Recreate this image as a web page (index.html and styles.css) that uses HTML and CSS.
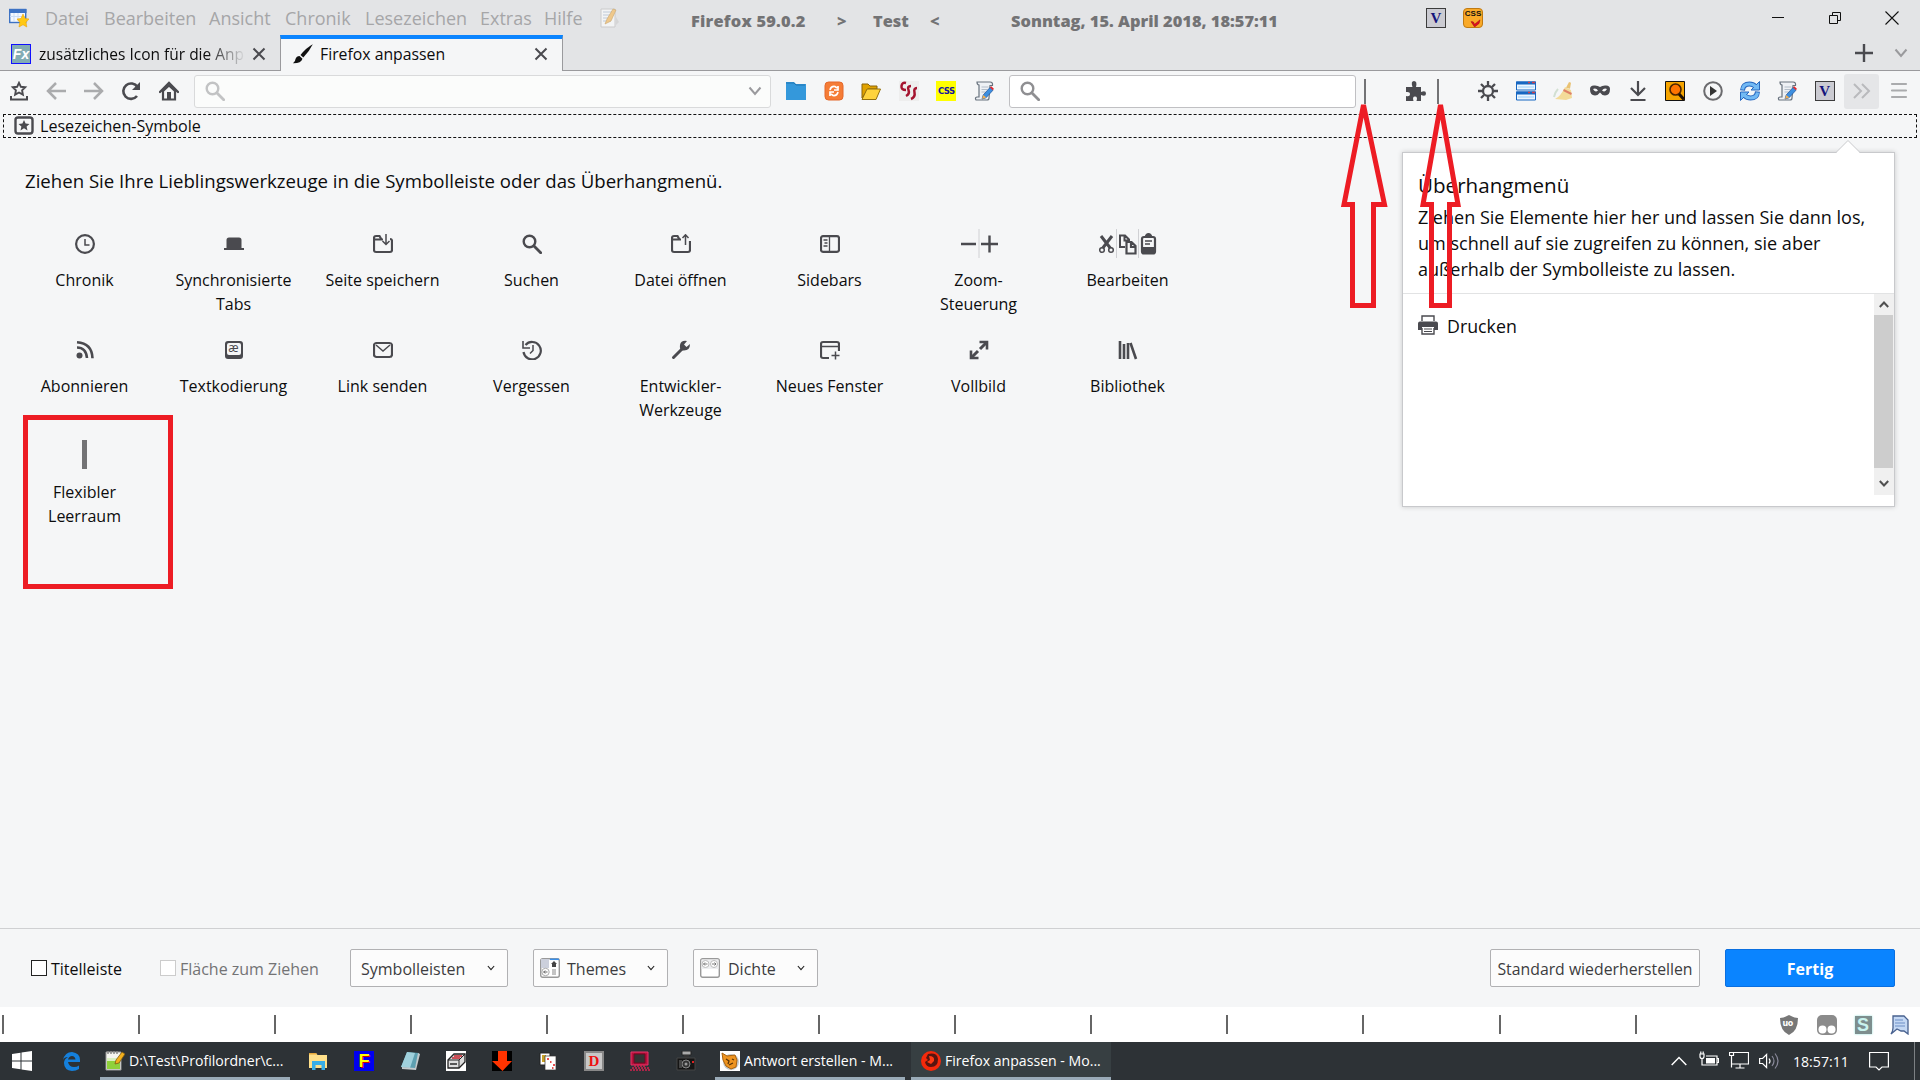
FILE: index.html
```html
<!DOCTYPE html>
<html lang="de">
<head>
    <meta charset="UTF-8">
    <meta name="viewport" content="width=device-width, initial-scale=1.0">
    <title>Firefox anpassen</title>
    <link rel="stylesheet" href="styles.css">
</head>
<body>
    <svg class="defs" width="0" height="0">
        <symbol id="i-search" viewBox="0 0 20 20"><circle cx="7.5" cy="7.5" r="5.8" fill="none" stroke="currentColor" stroke-width="2.4"/><path d="M12 12l6.7 6.7" stroke="currentColor" stroke-width="2.8" stroke-linecap="round"/></symbol>
        <symbol id="i-x" viewBox="0 0 14 14"><path d="M1.5 1.5l11 11M12.500 1.500l-11 11" stroke="currentColor" stroke-width="2"/></symbol>
        <symbol id="i-down" viewBox="0 0 14 10"><path d="M1.500 1.500L7 8l5.500-6.500" fill="none" stroke="currentColor" stroke-width="2"/></symbol>
        <symbol id="i-scroll" viewBox="0 0 20 20">
            <path d="M3 1h13q3 0 2.500 3.500h-2.500L15 17q0 2-2 2H2q-1.500-2.500 1-3h2V4Q3 4 3 1z" fill="#eef1f5" stroke="#68727e" stroke-width="1.200"/>
            <path d="M7.500 6h7M7.500 8.500h6M7.500 11h4" stroke="#b3bdc9"/>
            <path d="M8 18l1.200-4 6.800-7.500 3 2.700-7 7.600z" fill="#3d8fe0" stroke="#1d4f95" stroke-width=".7"/>
            <path d="M16 6.500l1.300-1.200 2.600 2.400L19 9.200z" fill="#e3242b"/>
            <path d="M8 18l1.200-4 3 2.500z" fill="#f4b052"/>
        </symbol>
    </svg>

    <header class="titlebar">
        <svg class="ic" viewBox="0 0 20 20"><rect x=".7" y="1.500" width="16" height="13" fill="#f3f8ff" stroke="#3d72c4" stroke-width="1.400"/><path d="M0 3h17.500" stroke="#3d72c4" stroke-width="4"/><path d="M5 5v9M9 5v9M1 8.500h15" stroke="#cbdcf5"/><path d="M14 6l2 4.500 4 .5-3 3.300.8 4.700-3.800-2.300L10 19l.8-4.700L8 11l4-.5z" fill="#ffc814" stroke="#eda207" stroke-width=".6"/></svg>
        <nav class="menu">
            <span class="m1">Datei</span><span class="m2">Bearbeiten</span><span class="m3">Ansicht</span><span class="m4">Chronik</span><span class="m5">Lesezeichen</span><span class="m6">Extras</span><span class="m7">Hilfe</span>
        </nav>
        <svg class="ic faded" viewBox="0 0 20 20"><path d="M1 1h14v18H1z" fill="#fff" stroke="#bbb"/><path d="M3 4h9M3 7h8M3 10h6M3 13h8" stroke="#a9b9d0"/><path d="M5 16l2-5 6-10 3 1-5 11z" fill="#f8b650" stroke="#b98025" stroke-width=".6"/><path d="M16 9l3 5-3 3z" fill="#ccc"/></svg>
        <div class="caption">
            <span class="c1">Firefox 59.0.2</span><span class="c2">&gt;</span><span class="c3">Test</span><span class="c4">&lt;</span><span class="c5">Sonntag, 15. April 2018, 18:57:11</span>
        </div>
        <span class="vbox">V</span>
        <span class="cssbadge">CSS<svg viewBox="0 0 14 9"><path d="M2 3q3-1 4 3l6-5-1 4-5 4z" fill="#e01022" stroke="#9b0b12" stroke-width=".6"/></svg></span>
        <div class="winctl">
            <svg viewBox="0 0 14 14"><path d="M1 6.500h12" stroke="#111"/></svg>
            <svg viewBox="0 0 14 14"><path d="M1.500 4.500h8v8h-8zM4.500 4.500v-3h8v8h-3" fill="none" stroke="#111"/></svg>
            <svg viewBox="0 0 14 14"><path d="M.5 .5l13 13M13.500 .5l-13 13" stroke="#111" stroke-width="1.100"/></svg>
        </div>
    </header>

    <div class="tabs">
        <div class="tab">
            <span class="fx">Fx</span>
            <span class="label fade">zusätzliches Icon für die Anp</span>
            <svg class="close"><use href="#i-x"/></svg>
        </div>
        <div class="tab active">
            <svg class="ic" viewBox="0 0 20 20"><path d="M19.800 .3Q13 4 7.500 11l2.800 2.500Q16 8 19.800 .3z" fill="#111"/><path d="M6.500 12l3 2.800Q8 19.500 0 19.300q2.500-2 2.500-4.300 1-3 4-3z" fill="#111"/></svg>
            <span class="label">Firefox anpassen</span>
            <svg class="close"><use href="#i-x"/></svg>
        </div>
        <div class="tabsend">
            <svg class="plus" viewBox="0 0 18 18"><path d="M9 0v18M0 9h18" stroke="#4a4a4f" stroke-width="2.400"/></svg>
            <svg class="chev"><use href="#i-down"/></svg>
        </div>
    </div>

    <div class="navbar">
        <div class="slots">
            <span><svg class="ic" viewBox="0 0 20 20"><path d="M10 1.800l1.900 4 4.300.5-3.100 3 .8 4.300L10 11.500l-3.900 2.100.8-4.300-3.100-3 4.300-.5z" fill="none" stroke="#4a4a4f" stroke-width="1.900"/><path d="M2 15v3.500h16V15" fill="none" stroke="#4a4a4f" stroke-width="2"/></svg></span>
            <span><svg class="ic pale" viewBox="0 0 20 20"><path d="M20 10H2M10 2l-8 8 8 8" fill="none" stroke="currentColor" stroke-width="2.500"/></svg></span>
            <span><svg class="ic pale" viewBox="0 0 20 20"><path d="M0 10h18M10 2l8 8-8 8" fill="none" stroke="currentColor" stroke-width="2.500"/></svg></span>
            <span><svg class="ic" viewBox="0 0 20 20"><path d="M16 15a7.700 7.700 0 1 1 .5-9" fill="none" stroke="#4a4a4f" stroke-width="2.600"/><path d="M19 1v8h-8z" fill="#4a4a4f"/></svg></span>
            <span><svg class="ic" viewBox="0 0 20 20"><path d="M1 11L10 2l9 9" fill="none" stroke="#4a4a4f" stroke-width="2.400" stroke-linecap="round"/><path d="M4 10v8.500h12V10l-6-5.500z" fill="none" stroke="#4a4a4f" stroke-width="2.200"/><path d="M8 11h4v7H8z" fill="#4a4a4f"/></svg></span>
        </div>
        <div class="field url"><svg class="ic"><use href="#i-search"/></svg><svg class="chev"><use href="#i-down"/></svg></div>
        <div class="slots">
            <span><svg class="ic" viewBox="0 0 20 20"><path d="M0 1h8l2 2h10v16H0z" fill="#3498db"/><path d="M0 2h8l2 2h9" fill="none" stroke="#2077b4"/></svg></span>
            <span><svg class="ic" viewBox="0 0 20 20"><rect x="1" y="1" width="18" height="18" rx="3.500" fill="#f57c36" stroke="#e4672a"/><path d="M6 9q1-4 5-3.500l2 1.500M14 5v4h-4M14 11q-1 4-5 3.500L7 13M6 15v-4h4" fill="none" stroke="#fff" stroke-width="1.700"/></svg></span>
            <span><svg class="ic" viewBox="0 0 20 20"><path d="M1 17V3h6l2 2h7v3H7z" fill="#e0a200" stroke="#8b6508"/><path d="M1 18.500L6 8h13.500L15 18.500z" fill="#ffd33d" stroke="#94700e"/></svg></span>
            <span><svg class="ic" viewBox="0 0 20 20"><path d="M0 0h20v20H0z" fill="#eee"/><path d="M7 2Q3 1 2.500 5T7 9M12 5q-4 0-2.500 4t-2.500 6M18 7q-3.500 0-2.500 4.500T12 18" fill="none" stroke="#a5142f" stroke-width="2.500"/></svg></span>
            <span><b class="cssy">CSS</b></span>
            <span><svg class="ic"><use href="#i-scroll"/></svg></span>
        </div>
        <div class="field search"><svg class="ic"><use href="#i-search"/></svg></div>
        <i class="sep s1"></i>
        <svg class="ic puzzle" viewBox="0 0 20 20"><path d="M0 6h6.500Q4.500 0 8 0t2 6h5v5q5-2 5 1.500T15 14v6h-4.500q1.500-4.500-1.500-4.500T7.500 20H0v-5q4 1 4-1.800T0 11z" fill="#4a4a4f"/></svg>
        <i class="sep s2"></i>
        <div class="slots right">
            <span><svg class="ic" viewBox="0 0 20 20"><circle cx="10" cy="10" r="5" fill="none" stroke="#4a4a4f" stroke-width="2.300"/><path d="M10 0v4M10 16v4M0 10h4M16 10h4M3 3l3 3M14 14l3 3M17 3l-3 3M6 14l-3 3" stroke="#4a4a4f" stroke-width="2.300"/></svg></span>
            <span><svg class="ic" viewBox="0 0 20 20"><path d="M.5 1h19v8H.5zM.5 11h19v8H.5z" fill="#edf6ff" stroke="#1767c1"/><path d="M0 2h20M0 12h20" stroke="#1767c1" stroke-width="3"/><path d="M12 1.500h2M16 1.500h3M12 11.500h2M16 11.500h3" stroke="#d3404a" stroke-width="1.500"/><path d="M2 6h16M2 16h16" stroke="#c4e3fc" stroke-width="2"/></svg></span>
            <span><svg class="ic broom" viewBox="0 0 20 20"><path d="M16 1l2 .7-1 6-4-1z" fill="#e7b95d"/><path d="M12 6l6 3 1 8-6 2-11-1q6-3 10-12z" fill="#f3d789"/><path d="M10.500 9l8 4" stroke="#db6d4e" stroke-width="2"/><path d="M1 16q1-5 4-8" stroke="#ccdccc" stroke-width="2" fill="none"/></svg></span>
            <span><svg class="ic" viewBox="0 0 20 20"><path d="M0 8q0-4 5-3.500 3 0 5 1.500 2-1.500 5-1.500 5-.5 5 3.500 0 6.500-5 6.500-3 0-5-3-2 3-5 3-5 0-5-6.500z" fill="#4a4a4f"/><path d="M3 8q3-1.500 5 1.500-3 2.500-5-1.500zM17 8q-3-1.500-5 1.500 3 2.500 5-1.500z" fill="#f5f6f7"/></svg></span>
            <span><svg class="ic" viewBox="0 0 20 20"><path d="M10 0v14M3 7l7 7 7-7M2.500 19h15" fill="none" stroke="#4a4a4f" stroke-width="2.200"/></svg></span>
            <span><svg class="ic" viewBox="0 0 20 20"><path d="M.5 .5h19v19H.5z" fill="#f5a400" stroke="#111"/><circle cx="10.500" cy="8.500" r="5.500" fill="#ff7400" stroke="#4d2500" stroke-width="1.600"/><path d="M14 13l5 5.500" stroke="#221100" stroke-width="3"/></svg></span>
            <span><svg class="ic" viewBox="0 0 20 20"><circle cx="10" cy="10" r="8.800" fill="none" stroke="#6b6b6e" stroke-width="2"/><path d="M7 5l7 5-7 5z" fill="#333"/></svg></span>
            <span><svg class="ic" viewBox="0 0 20 20"><path d="M2.500 9.500Q3 3 9.500 3q3.500 0 6 2.500M17.500 10.500Q17 17 10.500 17q-3.500 0-6-2.500" fill="none" stroke="#2868c0" stroke-width="5"/><path d="M19.500 .5v8.500H11zM.5 19.500V11H9z" fill="#72b9f4" stroke="#2868c0"/><path d="M2.500 8.500Q3 3 9.500 3q3.500 0 6 2.500M17.500 11.500Q17 17 10.500 17q-3.500 0-6-2.500" fill="none" stroke="#72b9f4" stroke-width="3.200"/></svg></span>
            <span><svg class="ic"><use href="#i-scroll"/></svg></span>
            <span><b class="vbox">V</b></span>
            <span class="over"><svg class="ic" viewBox="0 0 20 20"><path d="M2 3l7 7-7 7M10 3l7 7-7 7" fill="none" stroke="#b9babd" stroke-width="2"/></svg></span>
            <span><svg class="ic" viewBox="0 0 20 20"><path d="M3 3h14M3 9.500h14M3 16h14" stroke="#aaabad" stroke-width="2.200" stroke-linecap="round"/></svg></span>
        </div>
    </div>

    <div class="bookmarks">
        <svg class="ic" viewBox="0 0 20 20"><rect x="1.500" y="1.500" width="17" height="16" rx="2.500" fill="none" stroke="#4a4a4f" stroke-width="2.400"/><path d="M10 4l1.600 3.500 3.900.4-2.900 2.500.9 4L10 12.300l-3.500 2.100.9-4-2.900-2.500 3.900-.4z" fill="#4a4a4f"/></svg>
        <span>Lesezeichen-Symbole</span>
    </div>

    <main class="content">
        <h1>Ziehen Sie Ihre Lieblingswerkzeuge in die Symbolleiste oder das Überhangmenü.</h1>
        <div class="palette">
            <div class="item"><svg class="ic" viewBox="0 0 20 20"><circle cx="10" cy="10" r="8.900" fill="none" stroke="currentColor" stroke-width="2.200"/><path d="M10 5v6h4.500" fill="none" stroke="currentColor" stroke-width="1.500"/></svg><p>Chronik</p></div>
            <div class="item"><svg class="ic" viewBox="0 0 20 20"><path d="M2.500 14V6q0-2.500 2.500-2.500h10q2.500 0 2.500 2.500v8H20v2H0v-2z" fill="currentColor"/></svg><p>Synchronisierte<br>Tabs</p></div>
            <div class="item"><svg class="ic" viewBox="0 0 20 20"><path d="M10 5.500H8.500L6.500 2H3Q1 2 1 4v12q0 2 2 2h14q2 0 2-2V7q0-2-2-2M1 5.500h9" fill="none" stroke="currentColor" stroke-width="2.200"/><path d="M13 0v10M9.500 7L13 10.500 16.500 7" fill="none" stroke="currentColor" stroke-width="1.500"/></svg><p>Seite speichern</p></div>
            <div class="item"><svg class="ic"><use href="#i-search"/></svg><p>Suchen</p></div>
            <div class="item"><svg class="ic" viewBox="0 0 20 20"><path d="M10 5.500H8.500L6.500 2H3Q1 2 1 4v12q0 2 2 2h14q2 0 2-2V7M1 5.500h9" fill="none" stroke="currentColor" stroke-width="2.200"/><path d="M14.500 11V1M11.500 4l3-3.200 3 3.200" fill="none" stroke="currentColor" stroke-width="1.500"/></svg><p>Datei öffnen</p></div>
            <div class="item"><svg class="ic" viewBox="0 0 20 20"><rect x="1" y="2.200" width="18" height="15.600" rx="2" fill="none" stroke="currentColor" stroke-width="2.200"/><path d="M9.500 2v16M3.500 6h4M4.500 9h3M3.500 12h4" stroke="currentColor" stroke-width="1.300"/></svg><p>Sidebars</p></div>
            <div class="item"><svg class="wide" viewBox="0 0 60 30"><path d="M12 15h15M32 15h17M40.500 6.500v17" stroke="currentColor" stroke-width="2.400"/><path d="M30 0v29" stroke="#d0d1d4"/></svg><p>Zoom-<br>Steuerung</p></div>
            <div class="item"><svg class="wide" viewBox="0 0 60 30"><path d="M3 7l10 13M14 7L4 20" stroke="currentColor" stroke-width="3"/><circle cx="4" cy="21" r="2.300" fill="#f5f6f7" stroke="currentColor" stroke-width="1.500"/><circle cx="13" cy="21" r="2.300" fill="#f5f6f7" stroke="currentColor" stroke-width="1.500"/><path d="M18.500 0v29M40.500 0v29" stroke="#d0d1d4"/><path d="M27 18h-5V6.500h5l4 4v2.500M26.500 6.500v5h4" fill="none" stroke="currentColor" stroke-width="2"/><path d="M28.500 13h5l4 4v7.500h-9zM33 13v5h5" fill="#f5f6f7" stroke="currentColor" stroke-width="2.200"/><rect x="44" y="8" width="13" height="16.500" rx="2" fill="none" stroke="currentColor" stroke-width="2.200"/><path d="M46.500 8q1-4 4-4t4 4zM44 18h13v6H44z" fill="currentColor"/><path d="M47 12h7M47 15h5" stroke="currentColor" stroke-width="1.300"/></svg><p>Bearbeiten</p></div>
            <div class="item"><svg class="ic" viewBox="0 0 20 20"><circle cx="4.500" cy="15.500" r="3" fill="currentColor"/><path d="M2 7.500q9 0 10 10.500M2 2.200q15 1 15.500 16" fill="none" stroke="currentColor" stroke-width="2.600"/></svg><p>Abonnieren</p></div>
            <div class="item"><span class="ae"><b>æ</b></span><p>Textkodierung</p></div>
            <div class="item"><svg class="ic" viewBox="0 0 20 20"><rect x="1" y="3" width="18" height="14" rx="2.500" fill="none" stroke="currentColor" stroke-width="2.200"/><path d="M3 5l7 6 7-6" fill="none" stroke="currentColor" stroke-width="1.500"/></svg><p>Link senden</p></div>
            <div class="item"><svg class="ic" viewBox="0 0 20 20"><path d="M3.500 5a8.700 8.700 0 1 1-2 7" fill="none" stroke="currentColor" stroke-width="2.200"/><path d="M1 1v7h7" fill="none" stroke="currentColor" stroke-width="1.600"/><path d="M11 5v5.500L8 13.500" fill="none" stroke="currentColor" stroke-width="1.500"/></svg><p>Vergessen</p></div>
            <div class="item"><svg class="ic" viewBox="0 0 20 20"><path d="M2.500 17.500l10-10" stroke="currentColor" stroke-width="3" stroke-linecap="round"/><path d="M16 1q-6-1-7 4-1 6 4 5.500 6 0 6-6.500l-3.500 3-2.500-2.500z" fill="currentColor"/></svg><p>Entwickler-<br>Werkzeuge</p></div>
            <div class="item"><svg class="ic" viewBox="0 0 20 20"><path d="M9 18H3q-2 0-2-2V4q0-2 2-2h14q2 0 2 2v7" fill="none" stroke="currentColor" stroke-width="2.200"/><path d="M1 6.500h18M15.500 11.500v8M11.500 15.500h8" stroke="currentColor" stroke-width="1.500"/></svg><p>Neues Fenster</p></div>
            <div class="item"><svg class="ic" viewBox="0 0 20 20"><path d="M11 9l6-6M3 17l6-6" stroke="currentColor" stroke-width="3"/><path d="M10.500 2H18v7.500M2 10.500V18h7.500" fill="none" stroke="currentColor" stroke-width="2.600"/></svg><p>Vollbild</p></div>
            <div class="item"><svg class="ic" viewBox="0 0 20 20"><path d="M2 1v18M6 4v15M10 3v16M12.500 3l5.500 16" fill="none" stroke="currentColor" stroke-width="2.600"/></svg><p>Bibliothek</p></div>
            <div class="item"><i class="bar"></i><p>Flexibler<br>Leerraum</p></div>
        </div>

        <!-- overflow panel -->
        <aside class="panel">
            <svg class="tip" viewBox="0 0 24 13"><path d="M0 12.500L12 .5l12 12" fill="#fff" stroke="#c8c9cc"/><path d="M1 12.500h22" stroke="#fff"/></svg>
            <h2>Überhangmenü</h2>
            <p>Ziehen Sie Elemente hier her und lassen Sie dann los,<br>um schnell auf sie zugreifen zu können, sie aber<br>außerhalb der Symbolleiste zu lassen.</p>
            <div class="list">
                <div class="entry"><svg class="ic" viewBox="0 0 20 20"><path d="M4 6V1h12v5M4 13v6h12v-6" fill="#fff" stroke="#4a4a4f" stroke-width="1.400"/><path d="M2 6.500h16q2 0 2 2V15h-4v-3H4v3H0V8.500q0-2 2-2z" fill="#4a4a4f"/><path d="M6 14h8M6 16.500h8" stroke="#4a4a4f" stroke-width="1.200"/></svg><span>Drucken</span></div>
                <div class="scroll">
                    <svg viewBox="0 0 10 7"><path d="M.8 6L5 1.500 9.200 6" fill="none" stroke="#505050" stroke-width="2"/></svg>
                    <i></i>
                    <svg viewBox="0 0 10 7"><path d="M.8 1L5 5.500 9.200 1" fill="none" stroke="#505050" stroke-width="2"/></svg>
                </div>
            </div>
        </aside>
    </main>

    <footer class="custom">
        <label class="chk"><i></i><span class="t1">Titelleiste</span></label>
        <label class="chk off"><i></i><span class="t2">Fläche zum Ziehen</span></label>
        <button class="b1"><span>Symbolleisten</span><svg class="mini"><use href="#i-down"/></svg></button>
        <button class="b2"><svg class="ic" viewBox="0 0 20 20"><rect x=".7" y=".7" width="18.600" height="18.600" rx="2" fill="#fff" stroke="#999" stroke-width="1.400"/><path d="M1 1h8v9H1z" fill="#ccd0dc"/><path d="M10 1.300h9" stroke="#3b8fe8" stroke-width="1.500"/><path d="M14 3l3 3h-1v3h-4V6h-1z" fill="#444"/><circle cx="5.500" cy="14" r="3.700" fill="none" stroke="#aaa"/><path d="M3.500 14h4M5.200 12.500L3.700 14l1.500 1.500" fill="none" stroke="#666"/><path d="M12 12h4M12 14h4M12 16h4" stroke="#888"/></svg><span>Themes</span><svg class="mini"><use href="#i-down"/></svg></button>
        <button class="b3"><svg class="ic" viewBox="0 0 20 20"><rect x=".7" y=".7" width="18.600" height="18.600" rx="2" fill="#fff" stroke="#999" stroke-width="1.400"/><path d="M1.500 1.500h17V11h-17z" fill="#eeeff1"/><circle cx="5.500" cy="6" r="3.500" fill="#fff" stroke="#bbb"/><circle cx="14" cy="6" r="3.500" fill="#fff" stroke="#bbb"/><path d="M3.500 6h4M5 4.500L3.500 6 5 7.500M12 6h4M14.500 4.500L16 6l-1.500 1.500" fill="none" stroke="#777"/></svg><span>Dichte</span><svg class="mini"><use href="#i-down"/></svg></button>
        <button class="reset">Standard wiederherstellen</button>
        <button class="done">Fertig</button>
    </footer>

    <div class="addonbar">
        <i></i><i></i><i></i><i></i><i></i><i></i><i></i><i></i><i></i><i></i><i></i><i></i><i></i>
        <div class="addons">
            <span class="ub"><svg class="ic" viewBox="0 0 20 20"><path d="M10 0q5 3 9 3 0 13-9 17Q1 16 1 3q4 0 9-3z" fill="#777"/></svg><b>uo</b></span>
            <svg class="ic" viewBox="0 0 20 20"><rect width="20" height="20" rx="5" fill="#8b8b8b"/><circle cx="5.500" cy="14.500" r="4" fill="#fff"/><circle cx="14.500" cy="14.500" r="4" fill="#fff"/></svg>
            <b class="sty">S</b>
            <svg class="ic" viewBox="0 0 20 20"><path d="M3 1h11l4 4v14l-4-3-3 0-4-2-6 5q2-3 2-6z" fill="#c4d8f4" stroke="#48618f" stroke-width="1.300"/><path d="M5 5h8M5 8h10M5 11h10" stroke="#6d8fc6"/></svg>
        </div>
    </div>

    <div class="taskbar">
        <span class="start"><svg class="ic" viewBox="0 0 20 20"><path d="M0 3l8.500-1.200V9.500H0zM9.500 1.600L20 0v9.500H9.500zM0 10.500h8.500v7.700L0 17zM9.500 10.500H20V20L9.500 18.400z" fill="#fff"/></svg></span>
        <span class="edge"><svg class="ic" viewBox="0 0 20 20"><path d="M2 9Q4 1 11 1q8 1 8 8v2H7q1 5 6 5 3 0 5-1.500V18q-3 2-7 2-8-1-8-8 0-4 4-6-4 0-5 3zM7 8.500h7.500Q14 5 11 5T7 8.500z" fill="#1580dc"/></svg></span>
        <div class="task k1"><svg class="ic" viewBox="0 0 20 20"><path d="M1 1h15v18H1z" fill="#f4f4ef" stroke="#999"/><path d="M2 9h13v9H2z" fill="#8fd13b"/><path d="M2 7h13v3H2z" fill="#d9efc0"/><path d="M3 0v3M6 0v3M9 0v3M12 0v3" stroke="#888" stroke-width="1.500"/><path d="M10 13l1-4 6-8 3 2-6 9z" fill="#f2b01d" stroke="#7f5b12" stroke-width=".8"/></svg><span>D:\Test\Profilordner\c...</span></div>
        <div class="quick">
            <span><svg class="ic" viewBox="0 0 20 20"><path d="M1 2h7l1.500 2H19v13H1z" fill="#ffe08a"/><path d="M1 2h7l1 1.500H1z" fill="#e8a93c"/><path d="M4 19v-9h13v9h-3.500v-5h-6v5z" fill="#38aee8"/></svg></span>
            <span><b class="fbox">F</b></span>
            <span><svg class="ic" viewBox="0 0 20 20"><path d="M7 1l12 1-4 16-14-2z" fill="#5d9fb0"/><path d="M7 1l8 1-5 15-9-1z" fill="#9fd0dc"/><path d="M18 2l2 1-4 16-14-1v-2l13 1z" fill="#c3cacd"/></svg></span>
            <span><svg class="ic" viewBox="0 0 20 20"><path d="M0 0h20v20H0z" fill="#fff"/><path d="M2 9l6-6h11v8l-6 6H2z" fill="#ddd" stroke="#222" stroke-width="1.300"/><path d="M2 9h11v8M13 9l6-6" stroke="#222" fill="none"/><path d="M8 5h8M6 7h8" stroke="#c3202b" stroke-width="1.400"/><path d="M4 13h7" stroke="#555" stroke-width="2"/></svg></span>
            <span><svg class="ic" viewBox="0 0 20 20"><path d="M0 0h20v20H0z" fill="#000"/><path d="M6 0h9v10h5L10.500 20 0 10h6z" fill="#ff3300"/></svg></span>
            <span><svg class="ic" viewBox="0 0 20 20"><path d="M2 2h10v12H2z" fill="#fff" stroke="#222"/><path d="M4 4h4v7H4z" fill="#c9a227"/><path d="M7 5h11v14H7z" fill="#fff" stroke="#333" stroke-width=".7"/><path d="M9 8h2M12 11h1.500M15 14h2M14 17h1.500" stroke="#e01515" stroke-width="1.700"/></svg></span>
            <span><b class="dbox">D</b></span>
            <span><svg class="ic" viewBox="0 0 20 20"><path d="M1 1h17v13H1z" fill="#b6103b" stroke="#e8356a"/><path d="M4 3h11v9H4z" fill="#333" stroke="#700822"/><path d="M4 15h12M2 17h17M0 19h20" stroke="#d4224f" stroke-width="1.300" stroke-dasharray="2 1"/></svg></span>
            <span><svg class="ic" viewBox="0 0 20 20"><path d="M6 0h9v4H6z" fill="#aaa" stroke="#222"/><path d="M8 4h5v3H8z" fill="#333"/><path d="M1 7h18v12H1z" fill="#151515" stroke="#444"/><circle cx="10" cy="13" r="4" fill="#333" stroke="#888"/><circle cx="10" cy="13" r="1.500" fill="#999"/><path d="M3 9h3v8H3z" fill="#444"/><path d="M16 11h2" stroke="#d22" stroke-width="2"/></svg></span>
        </div>
        <div class="task k2"><svg class="ic" viewBox="0 0 20 20"><path d="M0 0h20v20H0z" fill="#fff"/><circle cx="11" cy="11" r="8" fill="#c4c9cc"/><path d="M2 2l5 3 8-1 2 5-1 7-5 2-5-3-3-6z" fill="#ee9420" stroke="#a8620e"/><path d="M6 8l3 2-1 3M12 8l2 1M9 14l4-2" stroke="#5b3508" stroke-width="1.300" fill="none"/></svg><span>Antwort erstellen - M...</span></div>
        <div class="task k3"><svg class="ic" viewBox="0 0 20 20"><circle cx="10" cy="10" r="10" fill="#f5290b"/><path d="M7 3q9-2 10 5 0 8-7 8-5 0-6-5l3-2-2-2z" fill="#571510"/><path d="M8 5q6 0 5 5l-3 3-4-2 3-2z" fill="#ff3a12"/></svg><span>Firefox anpassen - Mo...</span></div>
        <div class="tray">
            <svg class="up" viewBox="0 0 16 10"><path d="M.7 9L8 1.500 15.300 9" fill="none" stroke="#fff" stroke-width="1.500"/></svg>
            <svg class="ic" viewBox="0 0 20 20"><path d="M7 5h11v9H4.500M18.500 7.500h1v4h-1M1 3v2.500q0 2 2 2t2-2V3zM1.800 .5v2.500M4.200 .5v2.500M3 7.500v6.500h2" fill="none" stroke="#fff" stroke-width="1.200"/><path d="M7 7h9v5.500H7z" fill="#fff"/></svg>
            <svg class="ic" viewBox="0 0 20 20"><path d="M5 1.500h14.500v11.500H3M11 13v3.500M6.500 17h9M.5 1.500h4v3h-4zM2.500 4.500v12" fill="none" stroke="#fff" stroke-width="1.200"/></svg>
            <svg class="ic" viewBox="0 0 20 20"><path d="M.6 7.500h3l4-4v13l-4-4h-3z" fill="none" stroke="#fff" stroke-width="1.200"/><path d="M10 7.500q2 2.500 0 5" fill="none" stroke="#fff" stroke-width="1.200"/><path d="M13 5q4 5 0 10M16 2.500q6 7.500 0 15" fill="none" stroke="#889" stroke-width="1.200"/></svg>
            <span class="time">18:57:11</span>
            <svg class="ic" viewBox="0 0 20 20"><path d="M.6 1.500h18.800v14.500H13l-3 3-3-3H.6z" fill="none" stroke="#fff" stroke-width="1.200"/></svg>
        </div>
    </div>

    <!-- hand drawn marks over the window -->
    <svg class="marks" viewBox="0 0 1920 1080">
        <rect x="25.500" y="417.500" width="145" height="169"/>
        <path d="M1363.500 105L1344 204.500h8.500V305.500h21V204.500h11z"/>
        <path d="M1440.500 105L1423 204.500h8.500V305.500h18V204.500h8.500z"/>
    </svg>
</body>
</html>
```
FILE: styles.css
```css
* {
    box-sizing: border-box;
}
body {
    margin: 0;
    width: 1920px;
    height: 1080px;
    overflow: hidden;
    display: flex;
    flex-direction: column;
    background: #f5f6f7;
    color: #0c0c0d;
    font-family: "Open Sans", "Noto Sans", sans-serif;
    font-size: 16px;
    white-space: nowrap;
}
h1, h2, p {
    margin: 0;
    font-weight: 400;
}
svg {
    display: block;
    flex: none;
}
.defs {
    position: absolute;
}
.ic {
    width: 20px;
    height: 20px;
}
.chev {
    width: 14px;
    height: 10px;
    color: #9a9a9d;
}

/* title bar */
.titlebar {
    height: 35px;
    flex: none;
    display: flex;
    align-items: center;
    padding: 1px 0 0 9px;
    background: #e3e4e6;
}
.menu {
    display: flex;
    margin-left: 16px;
    width: 555px;
    color: #a6a6a8;
    font-size: 18px;
    line-height: 32px;
}
.m1 { width: 59px; }
.m2 { width: 105px; }
.m3 { width: 76px; }
.m4 { width: 80px; }
.m5 { width: 115px; }
.m6 { width: 64px; }
.m7 { width: 55px; }
.faded {
    opacity: .6;
}
.caption {
    display: flex;
    width: 735px;
    margin-left: 71px;
    padding-top: 5px;
    color: #737375;
    font-size: 16.400px;
    font-weight: 800;
}
.c1 { width: 146px; letter-spacing: .2px; }
.c2 { width: 36px; }
.c3 { width: 57px; }
.c4 { width: 81px; }
.vbox {
    width: 20px;
    height: 20px;
    flex: none;
    border: 1px solid #3c3c3c;
    background: #cbcbd2;
    color: #14147c;
    font: bold 15px/18px "Liberation Serif", serif;
    text-align: center;
}
.cssbadge {
    width: 20px;
    height: 20px;
    margin-left: 17px;
    border-radius: 4px;
    border: 1px solid #c07a12;
    background: #f9a928;
    color: #111;
    font: bold 8px/10px "Liberation Sans", sans-serif;
    text-align: center;
}
.cssbadge svg {
    width: 13px;
    height: 8px;
    margin-left: 5px;
}
.winctl {
    display: flex;
    gap: 43px;
    margin-left: 288px;
}
.winctl svg {
    width: 14px;
    height: 14px;
}

/* tabs */
.tabs {
    height: 36px;
    flex: none;
    display: flex;
    background: #e3e4e6;
    box-shadow: inset 0 -1px #9a9a9d;
}
.tab {
    width: 280px;
    display: flex;
    align-items: center;
    padding: 1px 14px 0 11px;
    font-size: 15.500px;
}
.tab.active {
    width: 283px;
    padding: 0 14px 2px 12px;
    background: #f5f6f7;
    border: 1px solid #9a9a9d;
    border-top: 4px solid #0a84ff;
    border-bottom: 0;
    font-size: 15.800px;
}
.label {
    flex: 1;
    margin-left: 7px;
}
.fade {
    margin-left: 8px;
    margin-right: 6px;
    -webkit-mask-image: linear-gradient(to left, transparent, #000 40px);
    mask-image: linear-gradient(to left, transparent, #000 40px);
}
.close {
    width: 14px;
    height: 14px;
    color: #4a4a4f;
}
.fx {
    width: 20px;
    height: 20px;
    border: 1px solid #1010ff;
    background: #82acb4;
    color: #fff;
    font: italic bold 14px/18px "Liberation Sans", sans-serif;
    text-align: center;
}
.tabsend {
    margin-left: auto;
    display: flex;
    align-items: center;
    gap: 21px;
    padding-right: 12px;
}
.plus {
    width: 18px;
    height: 18px;
}

/* toolbar */
.navbar {
    height: 42px;
    flex: none;
    display: flex;
    align-items: center;
    padding-bottom: 2px;
}
.slots {
    display: flex;
}
.slots > span {
    width: 37.500px;
    height: 35px;
    display: flex;
    align-items: center;
    justify-content: center;
}
.pale {
    color: #aaabad;
}
.field {
    height: 33px;
    display: flex;
    align-items: center;
    justify-content: space-between;
    padding: 0 8px 1px 10px;
    border: 1px solid #c0c0c3;
    border-radius: 3px;
    background: #fff;
    color: #8f8f92;
}
.url {
    width: 577px;
    margin: 0 7px 0 6px;
    background: #fbfcfb;
    border-color: #d9dadb;
    color: #c2c3c4;
}
.search {
    width: 347px;
    margin-left: 6px;
}
.cssy {
    width: 20px;
    height: 20px;
    background: #ff0;
    color: #1414a0;
    font: bold 8.500px/20px "DejaVu Sans", sans-serif;
    letter-spacing: -.6px;
    text-align: center;
}
.sep {
    width: 2px;
    height: 25px;
    background: #737375;
}
.s1 { margin-left: 8px; }
.puzzle { margin-left: 40px; }
.s2 { margin-left: 11px; }
.right { margin-left: 31px; }
.right > span {
    width: 37.400px;
}
.broom {
    opacity: .85;
}
.slots .over {
    background: #e5e6e8;
    border-radius: 3px;
    width: 35px;
    margin: 0 1px;
}

.bookmarks {
    height: 24px;
    flex: none;
    display: flex;
    align-items: center;
    margin: 1px 3px 0;
    padding-left: 10px;
    gap: 6px;
    border: 1px dashed #111;
    font-size: 16.100px;
}

/* palette */
.content {
    flex: 1;
    position: relative;
    padding: 26px 0 0 10px;
}
.content h1 {
    margin-left: 15px;
    font-size: 18.630px;
    line-height: 34px;
}
.palette {
    display: grid;
    grid-template-columns: repeat(8, 149px);
    grid-auto-rows: 106px;
    margin-top: 31px;
    color: #4a4a4f;
}
.item {
    display: flex;
    flex-direction: column;
    align-items: center;
    text-align: center;
    line-height: 24px;
}
.item p {
    color: #0c0c0d;
    margin-top: 9px;
}
.item .ic {
    margin: 5px 0;
}
.wide {
    width: 60px;
    height: 30px;
}
.bar {
    width: 5px;
    height: 29px;
    margin: -1px 0 2px;
    background: #737375;
}
.ae {
    width: 18px;
    height: 18px;
    margin: 6px 0;
    padding: 2px;
    border-radius: 3px;
    background: #4a4a4f;
}
.ae b {
    display: block;
    height: 12px;
    border-radius: 2px;
    background: #f5f6f7;
    color: #4a4a4f;
    font: 12px/10px "Open Sans", sans-serif;
}

/* overflow panel */
.panel {
    position: absolute;
    left: 1402px;
    top: 14px;
    width: 493px;
    height: 355px;
    background: #fff;
    border: 1px solid #c8c9cc;
    box-shadow: 0 0 5px rgba(0, 0, 0, .18);
}
.tip {
    position: absolute;
    left: 433px;
    top: -13px;
    width: 24px;
    height: 13px;
}
.panel h2 {
    padding: 16px 0 0 15px;
    font-size: 20.600px;
    line-height: 32px;
}
.panel p {
    height: 93px;
    padding: 3px 0 0 15px;
    font-size: 18.050px;
    line-height: 26px;
    border-bottom: 1px solid #e2e3e4;
}
.list {
    display: flex;
    justify-content: space-between;
    height: 201px;
}
.entry {
    display: flex;
    gap: 9px;
    padding: 20px 0 0 15px;
    font-size: 17.800px;
    line-height: 24px;
}
.entry .ic {
    margin-top: 1px;
}
.scroll {
    width: 20px;
    display: flex;
    flex-direction: column;
    align-items: center;
    background: #f0f0f0;
}
.scroll svg {
    width: 10px;
    height: 7px;
    margin: 7px 0;
}
.scroll i {
    width: 19px;
    height: 153px;
    margin-right: 1px;
    background: #cdcdcd;
}
.scroll svg:last-child {
    margin-top: 12px;
}

/* footer */
.custom {
    height: 79px;
    flex: none;
    display: flex;
    align-items: center;
    padding-left: 31px;
    border-top: 1px solid #cfd0d2;
}
.chk {
    width: 129px;
    display: flex;
    align-items: center;
    gap: 4px;
}
.chk span {
    padding-top: 2px;
}
.chk i {
    width: 16px;
    height: 16px;
    border: 1px solid #222;
    background: #fff;
}
.off {
    width: 190px;
    color: #737375;
}
.off i {
    border-color: #ccc;
}
button {
    height: 38px;
    display: flex;
    align-items: center;
    padding: 0 10px;
    border: 1px solid #b1b1b3;
    border-radius: 2px;
    background: #fcfcfc;
    color: #3c3c40;
    font: 16px "Open Sans", sans-serif;
    white-space: nowrap;
}
button span {
    padding-top: 2px;
}
.mini {
    width: 8px;
    height: 6px;
    margin: 0 2px 0 auto;
    color: #222;
}
.b1 { width: 158px; }
.b2 { width: 135px; margin-left: 25px; padding-left: 6px; gap: 7px; }
.b3 { width: 125px; margin-left: 25px; padding-left: 6px; gap: 8px; }
.reset {
    width: 210px;
    margin-left: 672px;
    justify-content: center;
    padding: 2px 0 0;
    font-size: 15.800px;
}
.done {
    width: 170px;
    margin-left: 25px;
    justify-content: center;
    padding-top: 2px;
    background: #0a84ff;
    border-color: #0a6fe0;
    color: #fff;
    font-weight: 700;
}

.addonbar {
    height: 35px;
    flex: none;
    display: flex;
    align-items: center;
    padding-left: 2px;
    background: #fff;
}
.addonbar > i {
    width: 136.050px;
    height: 19px;
    border-left: 2px solid #666;
}
.addons {
    display: flex;
    align-items: center;
    gap: 18px;
    margin-left: 8px;
}
.ub {
    position: relative;
}
.ub b {
    position: absolute;
    left: 4px;
    top: 3px;
    color: #fff;
    font: bold 8px/12px "DejaVu Sans", sans-serif;
    letter-spacing: -.5px;
}
.sty {
    width: 17px;
    height: 18px;
    background: #7d8e8e;
    color: #c9f3ee;
    font: bold 18px/18px "Liberation Sans", sans-serif;
    text-align: center;
    box-shadow: 0 0 2px #8fe0d8;
}

/* taskbar */
.taskbar {
    height: 38px;
    flex: none;
    display: flex;
    align-items: center;
    background: #2d3236;
    color: #fff;
    font-size: 14.100px;
}
.start, .edge {
    width: 44px;
    display: flex;
    justify-content: center;
}
.edge {
    width: 54px;
}
.task {
    height: 38px;
    display: flex;
    align-items: center;
    gap: 4px;
    padding-left: 5px;
    border-bottom: 3px solid #9aabb8;
    padding-top: 2px;
}
.k1 { width: 190px; margin-left: 2px; }
.k2 { width: 190px; margin-left: 6px; }
.k3 { width: 200px; margin-left: 6px; padding-left: 10px; background: #373f42; }
.quick {
    display: flex;
    margin-left: 5px;
}
.quick span {
    width: 46px;
    display: flex;
    justify-content: center;
}
.fbox, .dbox {
    width: 20px;
    height: 20px;
    background: #0000f0;
    color: #ff0;
    font: bold 18px/20px "Liberation Sans", sans-serif;
    text-align: center;
    text-shadow: 1px 1px #c00;
}
.dbox {
    border: 2px solid #888;
    background: #c8c8c8;
    color: #e11;
    font: bold 15px/16px "Liberation Serif", serif;
    text-shadow: none;
}
.tray {
    height: 38px;
    display: flex;
    align-items: center;
    margin-left: auto;
    margin-right: 5px;
    padding-right: 25px;
    gap: 10px;
    border-right: 1px solid #7c8083;
}
.up {
    width: 16px;
    height: 10px;
    margin-right: 2px;
}
.time {
    width: 65px;
    margin: 0 1px 0 4px;
}

.marks {
    position: absolute;
    left: 0;
    top: 0;
    width: 1920px;
    height: 1080px;
    fill: none;
    stroke: #ed1c24;
    stroke-width: 5;
    pointer-events: none;
}
```
